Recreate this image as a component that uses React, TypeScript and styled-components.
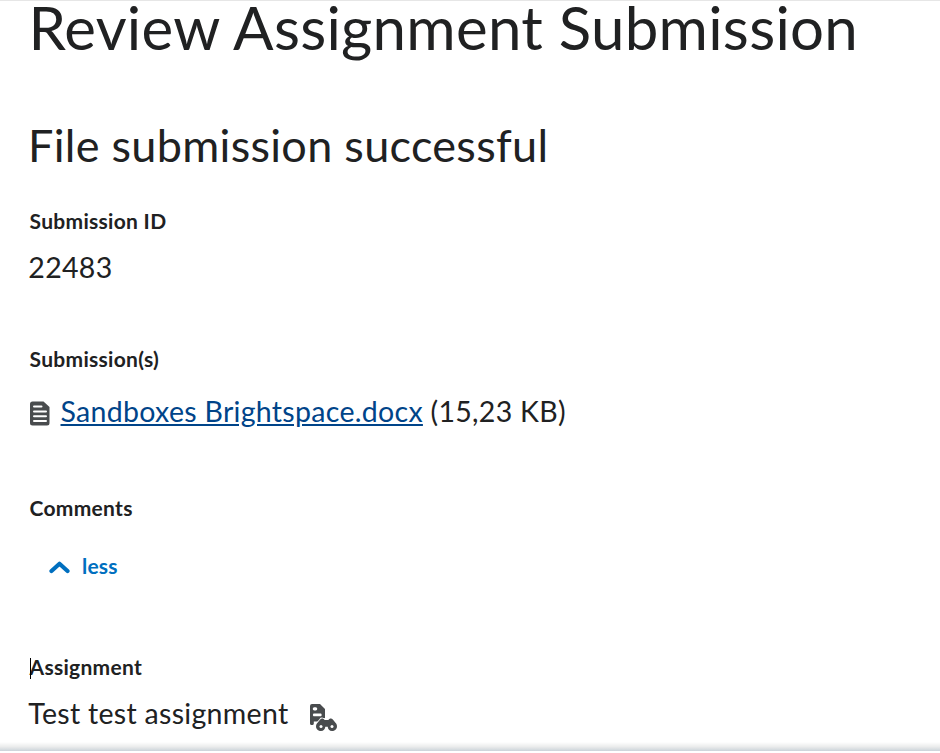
import React from "react";
import styled, { createGlobalStyle } from "styled-components";

const GlobalStyle = createGlobalStyle`
  * { box-sizing: border-box; }
  html, body { margin: 0; background: #fff; }
  body { font-family: Lato, sans-serif; color: #202122; }
`;

const Page = styled.main`
  height: 751px;
  display: flex;
  flex-direction: column;
  border-top: 1px solid #e6e6e6;
`;
const Content = styled.div`
  flex: 1;
  min-height: 0;
  padding-left: 29px;
`;
const Title = styled.h1`
  margin: 0 0 0 -0.6px;
  font-size: 60px;
  font-weight: 400;
  letter-spacing: 0.28px;
  line-height: 53px;
  white-space: nowrap;
`;
const Subtitle = styled.h2`
  margin: 62px 0 0 -1px;
  font-size: 45px;
  font-weight: 400;
  letter-spacing: 0.3px;
  line-height: 58px;
  white-space: nowrap;
`;
const Field = styled.section<{ $gap: number }>`
  margin-top: ${(p) => p.$gap}px;
`;
const Label = styled.h3`
  position: relative;
  margin: 0;
  padding-left: 0.5px;
  font-weight: 700;
  font-size: 21px;
  letter-spacing: 0.3px;
  line-height: 26px;
`;
const Caret = styled.span`
  position: absolute;
  left: 1px;
  top: 4px;
  width: 1px;
  height: 21px;
  background: #000;
`;
const Value = styled.div<{ $gap: number }>`
  display: flex;
  align-items: center;
  margin: ${(p) => p.$gap}px 0 0 -0.7px;
  height: 36px;
  font-size: 28.5px;
  letter-spacing: 0.3px;
  white-space: pre;
`;
const FileLink = styled.a`
  color: #004489;
  margin-left: 10.5px;
  text-decoration: underline;
`;
const Toggle = styled.button`
  display: flex;
  align-items: center;
  gap: 11px;
  margin: 31px 0 0 20px;
  padding: 0;
  height: 26px;
  border: 0;
  background: none;
  color: #006fbf;
  font: 700 21px Lato, sans-serif;
  letter-spacing: 0.2px;
`;
const FileIcon = styled.svg`
  margin: 4px 0 0 0.7px;
`;
const ToggleIcon = styled.svg`
  margin-top: 4px;
`;
const TaskIcon = styled.svg`
  margin: 9px 0 0 21.5px;
`;
const Edge = styled.div`
  height: 9px;
  background: linear-gradient(#fff, #eceded 50%, #cbd3d9);
`;

const DocumentIcon = () => (
  <FileIcon width="21" height="25" viewBox="0 0 21 25">
    <path d="M3.5 .5h11L20.5 6v16a2.5 2.5 0 0 1-2.5 2.5H3.5A2.5 2.5 0 0 1 1 22V3A2.5 2.5 0 0 1 3.5.5Z" fill="#494c4e" />
    <path d="M5 5.6h7.5M5 10.5h12M5 15.2h12M5 20h12" stroke="#fff" strokeWidth="2" strokeLinecap="round" />
  </FileIcon>
);

const ChevronUp = () => (
  <ToggleIcon width="22" height="14" viewBox="0 0 22 14">
    <path d="m2.5 11 8-7.2 8 7.2" fill="none" stroke="currentColor" strokeWidth="4.2" strokeLinecap="round" strokeLinejoin="round" />
  </ToggleIcon>
);

const AssignmentIcon = () => (
  <TaskIcon width="28" height="28" viewBox="0 0 28 28">
    <path
      fill="#494c4e"
      fillRule="evenodd"
      d="M2 0h8l5 5v9.3c-2.2-.9-4.3-.2-5.4 1.7L8.8 17.5H3.8v2c0 2-3.8 2-3.8 0V2A2 2 0 0 1 2 0Zm2.3 3.3c-2 0-2 3.2 0 3.2h1.4c2 0 2-3.2 0-3.2Zm-.2 6.1c-1.6 0-1.6 2.8 0 2.8h6.4c1.6 0 1.6-2.8 0-2.8Z"
    />
    <path
      fill="#494c4e"
      stroke="#fff"
      strokeWidth="1.6"
      paintOrder="stroke"
      d="M10.2 15.5c1-1.7 3.7-1.3 4.3.4h4c.6-1.7 3.3-2.1 4.3-.4l3.5 4.3c2 4-.7 7.2-4.3 7.2-2.6 0-4-1.7-4.3-4.2h-2.4c-.3 2.5-1.7 4.2-4.3 4.2-3.6 0-6.3-3.2-4.3-7.2Z"
    />
    <circle cx="11" cy="22.5" r="1.5" fill="#fff" />
    <circle cx="22" cy="22.5" r="1.5" fill="#fff" />
  </TaskIcon>
);

export default function App() {
  return (
    <Page>
      <GlobalStyle />
      <Content>
        <Title>Review Assignment Submission</Title>
        <Subtitle>File submission successful</Subtitle>
        <Field $gap={34}>
          <Label>Submission ID</Label>
          <Value $gap={15}>22483</Value>
        </Field>
        <Field $gap={61}>
          <Label>Submission(s)</Label>
          <Value $gap={21}>
            <DocumentIcon />
            <FileLink>Sandboxes Brightspace.docx</FileLink> (15,23 KB)
          </Value>
        </Field>
        <Field $gap={66}>
          <Label>Comments</Label>
          <Toggle>
            <ChevronUp />
            less
          </Toggle>
        </Field>
        <Field $gap={76}>
          <Label>
            <Caret />
            Assignment
          </Label>
          <Value $gap={15}>
            Test test assignment
            <AssignmentIcon />
          </Value>
        </Field>
      </Content>
      <Edge />
    </Page>
  );
}
